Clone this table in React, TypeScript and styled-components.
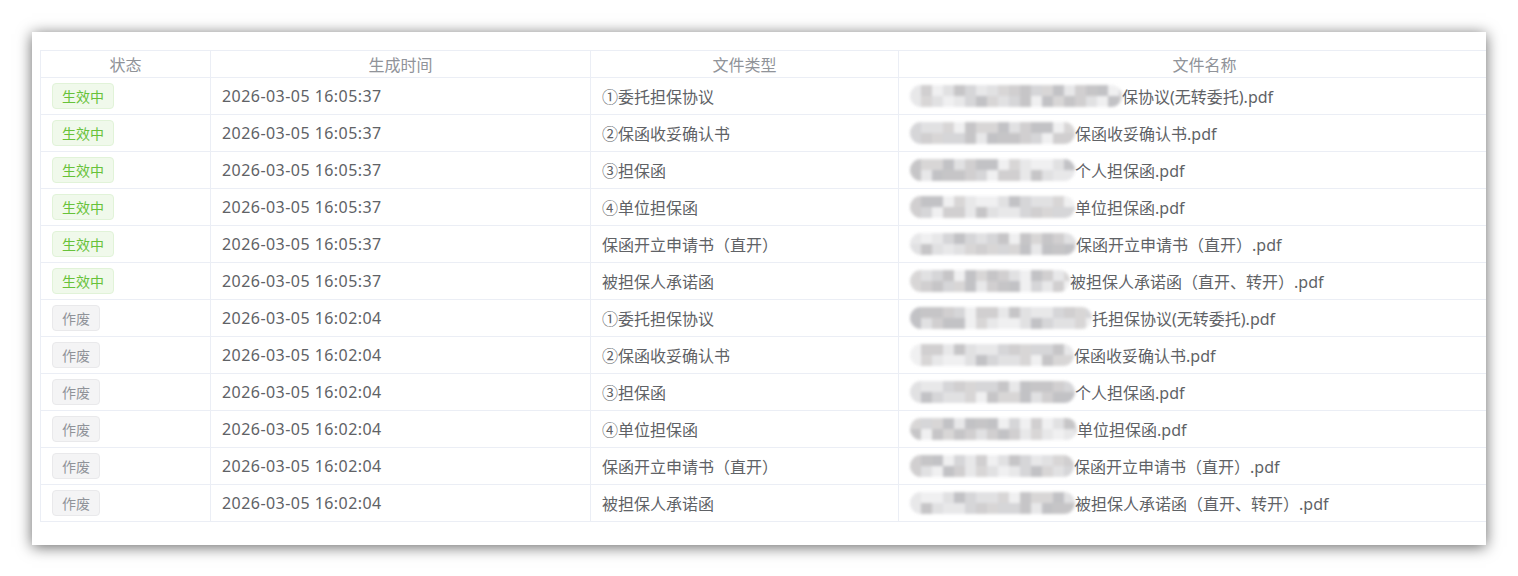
import React from 'react';
import styled, { createGlobalStyle, css } from 'styled-components';

const GlobalStyle = createGlobalStyle`
  body {
    margin: 0;
    background: #fff;
    font-family: "Noto Sans", "Noto Sans CJK SC", sans-serif;
  }
`;

const Page = styled.div`
  padding: 32px;
`;

const Card = styled.div`
  width: 1454px;
  height: 513px;
  box-sizing: border-box;
  background: #fff;
  box-shadow: 0 2px 14px rgba(0, 0, 0, 0.6);
  padding: 18px 0 0 8px;
  overflow: hidden;
`;

const Table = styled.div`
  width: 1470px;
  border-top: 1px solid #ebeef5;
  border-left: 1px solid #ebeef5;
`;

const Row = styled.div<{ $head?: boolean }>`
  display: grid;
  grid-template-columns: 170px 380px 308px 1fr;
  height: ${(p) => (p.$head ? '27px' : '37px')};
`;

const Cell = styled.div<{ $head?: boolean }>`
  box-sizing: border-box;
  border-right: 1px solid #ebeef5;
  border-bottom: 1px solid #ebeef5;
  display: flex;
  align-items: center;
  padding: 0 11px;
  white-space: nowrap;
  overflow: hidden;
  font-size: 16px;
  ${(p) =>
    p.$head
      ? css`
          justify-content: center;
          color: #909399;
        `
      : css`
          color: #606266;
        `}
`;

const Time = styled.span`
  letter-spacing: 0.45px;
`;

const Tag = styled.span<{ $type: 'success' | 'info' }>`
  display: inline-flex;
  align-items: center;
  height: 26px;
  box-sizing: border-box;
  padding: 0 9px;
  border-radius: 4px;
  font-size: 14px;
  ${(p) =>
    p.$type === 'success'
      ? css`
          background: #f0f9eb;
          border: 1px solid #e1f3d8;
          color: #67c23a;
        `
      : css`
          background: #f4f4f5;
          border: 1px solid #e9e9eb;
          color: #909399;
        `}
`;

const Mosaic = styled.span`
  display: inline-grid;
  grid-auto-flow: column;
  grid-template-rows: 11px 11px;
  flex: none;
  height: 22px;
  border-radius: 11px;
  overflow: hidden;
  filter: blur(1.6px);
  opacity: 0.85;
`;

const Pixel = styled.span`
  width: 11px;
`;

const greys = ['#e4e4e6', '#d2d0d0', '#c9c7c8', '#dcdcde', '#bdbcbe', '#eeeeef', '#cfcfd2', '#b8b8bc'];

const MosaicBlock: React.FC<{ width: number; seed: number }> = ({ width, seed }) => {
  const cols = Math.ceil(width / 11);
  const cells = [];
  for (let i = 0; i < cols * 2; i++) {
    const v = (i * 7 + seed * 13 + ((i * i + seed) % 5)) % greys.length;
    cells.push(<Pixel key={i} style={{ background: greys[v] }} />);
  }
  return <Mosaic style={{ width }}>{cells}</Mosaic>;
};

const rows = [
  { ok: true, time: '2026-03-05 16:05:37', type: '①委托担保协议', blur: 212, name: '保协议(无转委托).pdf' },
  { ok: true, time: '2026-03-05 16:05:37', type: '②保函收妥确认书', blur: 165, name: '保函收妥确认书.pdf' },
  { ok: true, time: '2026-03-05 16:05:37', type: '③担保函', blur: 165, name: '个人担保函.pdf' },
  { ok: true, time: '2026-03-05 16:05:37', type: '④单位担保函', blur: 165, name: '单位担保函.pdf' },
  { ok: true, time: '2026-03-05 16:05:37', type: '保函开立申请书（直开）', blur: 166, name: '保函开立申请书（直开）.pdf' },
  { ok: true, time: '2026-03-05 16:05:37', type: '被担保人承诺函', blur: 160, name: '被担保人承诺函（直开、转开）.pdf' },
  { ok: false, time: '2026-03-05 16:02:04', type: '①委托担保协议', blur: 182, name: '托担保协议(无转委托).pdf' },
  { ok: false, time: '2026-03-05 16:02:04', type: '②保函收妥确认书', blur: 164, name: '保函收妥确认书.pdf' },
  { ok: false, time: '2026-03-05 16:02:04', type: '③担保函', blur: 165, name: '个人担保函.pdf' },
  { ok: false, time: '2026-03-05 16:02:04', type: '④单位担保函', blur: 167, name: '单位担保函.pdf' },
  { ok: false, time: '2026-03-05 16:02:04', type: '保函开立申请书（直开）', blur: 164, name: '保函开立申请书（直开）.pdf' },
  { ok: false, time: '2026-03-05 16:02:04', type: '被担保人承诺函', blur: 165, name: '被担保人承诺函（直开、转开）.pdf' },
];

const App: React.FC = () => {
  return (
    <Page>
      <GlobalStyle />
      <Card>
        <Table>
          <Row $head>
            <Cell $head>状态</Cell>
            <Cell $head>生成时间</Cell>
            <Cell $head>文件类型</Cell>
            <Cell $head>文件名称</Cell>
          </Row>
          {rows.map((r, i) => (
            <Row key={i}>
              <Cell>
                <Tag $type={r.ok ? 'success' : 'info'}>{r.ok ? '生效中' : '作废'}</Tag>
              </Cell>
              <Cell>
                <Time>{r.time}</Time>
              </Cell>
              <Cell>{r.type}</Cell>
              <Cell>
                <MosaicBlock width={r.blur} seed={i} />
                {r.name}
              </Cell>
            </Row>
          ))}
        </Table>
      </Card>
    </Page>
  );
};

export default App;
